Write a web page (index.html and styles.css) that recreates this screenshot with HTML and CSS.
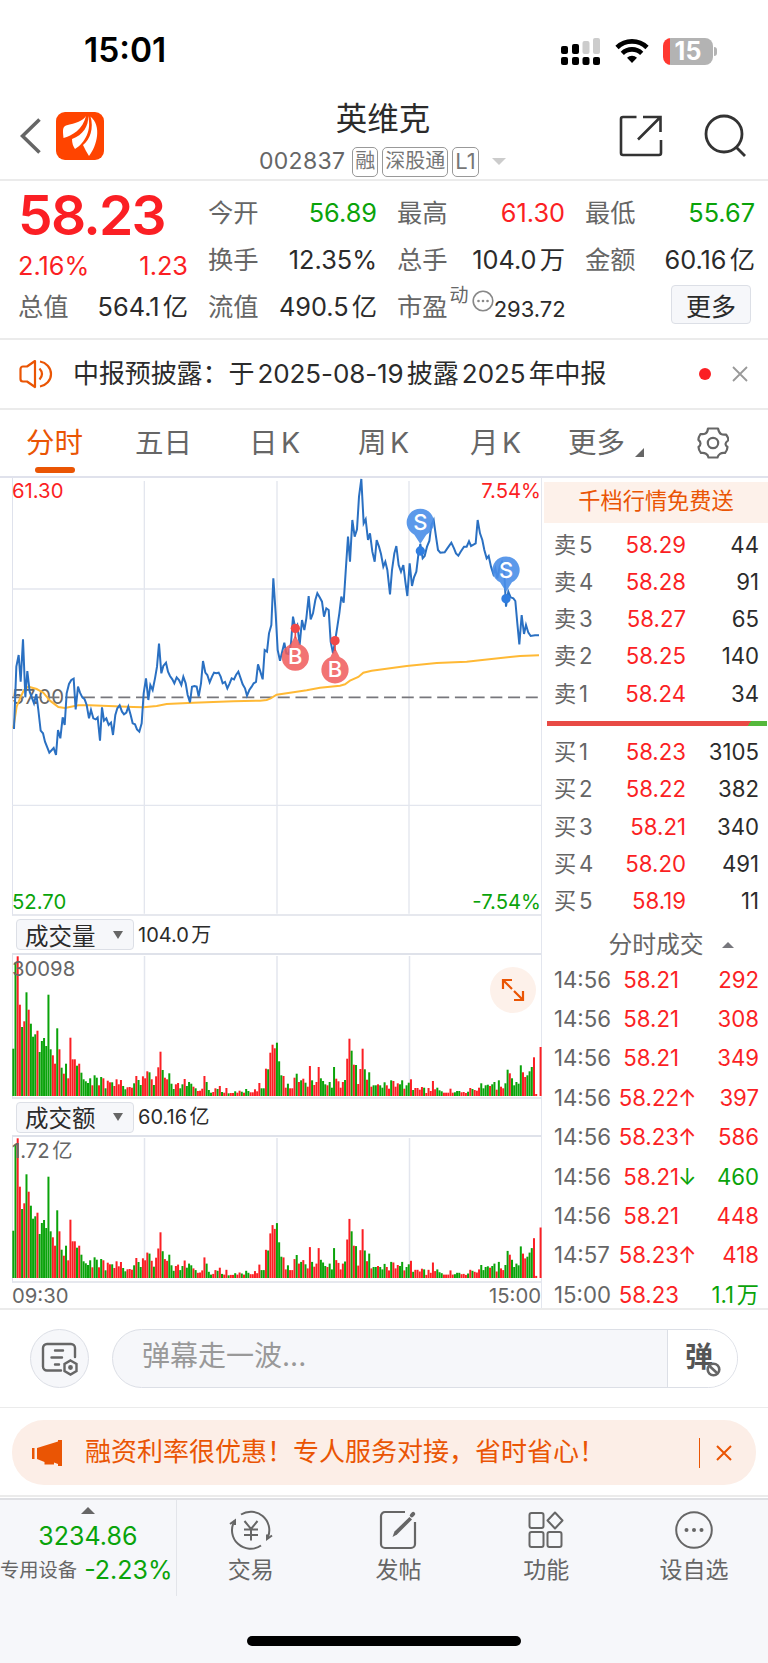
FILE: index.html
```
<!DOCTYPE html>
<html lang="zh-CN">
<head>
    <meta charset="UTF-8">
    <title>英维克 002837</title>
    <link rel="stylesheet" href="styles.css">
</head>
<body>
    <!-- 状态栏 -->
    <div class="status-bar">
        <span class="clock">15:01</span>
        <div class="status-icons">
            <svg class="signal" width="40" height="28" viewBox="0 0 40 28">
                <g fill="#000">
                    <rect x="0" y="9" width="7" height="8" rx="2"/>
                    <rect x="11" y="7" width="7" height="10" rx="2"/>
                    <rect x="0" y="20" width="7" height="8" rx="2"/>
                    <rect x="11" y="20" width="7" height="8" rx="2"/>
                    <rect x="21.500" y="20" width="7" height="8" rx="2"/>
                    <rect x="32" y="20" width="7" height="8" rx="2"/>
                </g>
                <rect x="21.500" y="4" width="7" height="13" rx="2" fill="#ccc"/>
                <rect x="32" y="1" width="7" height="16" rx="2" fill="#ccc"/>
            </svg>
            <svg class="wifi" width="34" height="26" viewBox="0 0 34 26" fill="none" stroke="#000" stroke-width="4.600">
                <path d="M2 9.500a21.500 21.500 0 0 1 30 0"/>
                <path d="M7.300 15.300a14 14 0 0 1 19.400 0"/>
                <path d="M17 25l-5-5.300a7.500 7.500 0 0 1 10 0z" fill="#000" stroke="none"/>
            </svg>
            <div class="battery"><span>15</span></div>
        </div>
    </div>

    <!-- 顶部导航 -->
    <div class="nav-bar">
        <svg class="back" width="22" height="36" viewBox="0 0 22 36" fill="none" stroke="#666" stroke-width="3.600"><path d="M19.500 1.500L2.500 18l17 16.500"/></svg>
        <svg class="logo" width="48" height="48" viewBox="0 0 48 48">
            <rect width="48" height="48" rx="9" fill="#ff4400"/>
            <path fill="#fff" d="M30 4C27 9 20 11 10 13.500C6 15 7 20 7.500 26C16 24 27 17 30 4z"/>
            <path fill="#fff" d="M32 4C33 14 27 23 16 27C16 31 17 34 19 37C29 31 36 18 32 4z"/>
            <path fill="#fff" d="M34.500 4.500C38 16 34 28 27 33C29 37 31 41 33 44C41 34 46 14 34.500 4.500z"/>
        </svg>
        <div class="stock-title">
            <h1>英维克</h1>
            <div class="stock-code">
                <span class="code">002837</span>
                <span class="tag">融</span>
                <span class="tag">深股通</span>
                <span class="tag level1">L1</span>
                <i class="tri-down light"></i>
            </div>
        </div>
        <svg class="share" width="44" height="44" viewBox="0 0 44 44" fill="none" stroke="#333" stroke-width="2.600">
            <path d="M17.500 3H4a2 2 0 0 0-2 2v34a2 2 0 0 0 2 2h36a2 2 0 0 0 2-2V26M24 3h17.500v15M41 3.500L19 25.500"/>
        </svg>
        <svg class="search" width="44" height="44" viewBox="0 0 44 44" fill="none" stroke="#333" stroke-width="2.800">
            <circle cx="20" cy="20" r="18"/><path d="M32.500 33.500l8.500 8.500"/>
        </svg>
    </div>

    <!-- 行情数据 -->
    <div class="quote">
        <div class="price up">58.23</div>
        <div class="field"><label>今开</label><b class="down">56.89</b></div>
        <div class="field"><label>最高</label><b class="up">61.30</b></div>
        <div class="field"><label>最低</label><b class="down">55.67</b></div>
        <div class="field change up"><b>2.16%</b><b>1.23</b></div>
        <div class="field"><label>换手</label><b>12.35%</b></div>
        <div class="field"><label>总手</label><b>104.0万</b></div>
        <div class="field"><label>金额</label><b>60.16亿</b></div>
        <div class="field"><label>总值</label><b>564.1亿</b></div>
        <div class="field"><label>流值</label><b>490.5亿</b></div>
        <div class="field pe">
            <label>市盈</label><sup>动</sup>
            <svg width="22" height="22" viewBox="0 0 22 22"><circle cx="11" cy="11" r="9.800" fill="none" stroke="#888" stroke-width="1.600"/><g fill="#888"><circle cx="6.500" cy="11" r="1.300"/><circle cx="11" cy="11" r="1.300"/><circle cx="15.500" cy="11" r="1.300"/></g></svg>
            <b>293.72</b>
        </div>
        <div class="more-cell"><button class="more-btn">更多</button></div>
    </div>

    <!-- 公告 -->
    <div class="notice">
        <svg width="34" height="30" viewBox="0 0 34 30" fill="none" stroke="#ea5504" stroke-width="2.200" stroke-linejoin="round">
            <path d="M16 2L8 7.500H4a2.500 2.500 0 0 0-2.500 2.500v10A2.500 2.500 0 0 0 4 22.500h4L16 28z"/>
            <path d="M20.500 9.500q5 5.500 0 11M21 2.500c6 1 11 6 11 12.500s-5 11.500-11 12.500"/>
        </svg>
        <p>中报预披露：于2025-08-19披露2025年中报</p>
        <i class="dot"></i>
        <svg width="16" height="16" viewBox="0 0 16 16" stroke="#999" stroke-width="1.800"><path d="M1 1l14 14M15 1L1 15"/></svg>
    </div>

    <!-- 周期切换 -->
    <div class="tabs">
        <span class="tab active">分时</span>
        <span class="tab">五日</span>
        <span class="tab">日K</span>
        <span class="tab">周K</span>
        <span class="tab">月K</span>
        <span class="tab tab-more">更多</span>
        <svg class="gear" width="32" height="32" viewBox="0 0 32 32" fill="none" stroke="#666" stroke-width="2.200" stroke-linejoin="round">
            <path d="M11 1.500h10q1 4.500 3 5.500t5 .5q3 4 2 6-2.500 2-2.500 3.500t2 3q0 3-2.500 6-3-.5-5 .8t-2.500 3.700h-9q-.5-2.500-2.500-3.700t-5-.8Q1.500 23 1.500 20q2-1.500 2-3.500t-2-3.500q-.5-2 2-6 3 .5 5-.5T11 1.500z"/>
            <circle cx="16" cy="16" r="5.200"/>
        </svg>
    </div>

    <div class="main">
        <div class="charts">
            <!-- 分时走势，坐标按 3 倍绘制 -->
            <div class="chart price-chart">
                <svg width="530" height="438" viewBox="36 24 1590 1314">
                    <g stroke="#e3e6ee" stroke-width="4">
                        <path d="M36 357h1590M36 1006h1590M433 33v1298M831 33v1298M1227 33v1298"/>
                    </g>
                    <text class="mid-label" x="35" y="702">57.00</text>
                    <path d="M36 682H1620" stroke="#77777c" stroke-width="5" stroke-dasharray="36 17.150"/>
                    <polyline class="avg-line" points="40,775 50,710 60,685 72,660 85,650 110,657 130,668 150,692 175,711 195,714 235,706 270,706 400,711 430,712 470,708 500,702 580,698 700,694 780,692 800,690 812,685 830,674 880,667 920,661 960,653 1020,647 1035,643 1050,632 1075,621 1090,608 1115,602 1220,588 1310,579 1400,575 1440,571 1530,561 1560,558 1617,556"/>
                    <polyline class="price-line" points="42,777 49,590 56,555 62,635 69,508 76,682 82,603 89,665 102,700 109,672 115,720 122,782 129,790 135,815 148,848 161,834 168,855 174,780 181,805 188,742 194,765 200,670 207,642 214,630 221,626 227,718 234,650 240,668 247,682 254,688 260,705 267,745 273,720 280,745 287,748 293,742 300,812 306,712 312,752 319,745 326,765 333,758 339,795 346,735 352,715 359,706 366,725 372,733 379,728 385,710 392,735 398,760 405,763 411,778 418,785 425,760 431,670 438,625 445,690 451,645 458,660 465,625 471,590 477,521 484,610 490,588 498,578 504,605 510,618 517,628 523,640 530,622 537,630 544,645 550,620 557,640 563,675 570,697 576,650 583,648 590,650 596,680 603,640 609,573 616,608 622,615 629,637 636,620 642,608 649,610 656,608 662,620 668,640 675,636 682,655 689,640 695,625 702,628 708,615 715,605 722,625 728,643 735,655 741,677 748,660 755,650 761,640 768,636 774,583 781,605 788,628 794,540 801,545 807,490 814,465 820,325 827,430 833,540 840,572 853,518 859,550 866,552 873,520 879,440 886,475 892,465 899,525 906,450 913,480 919,445 926,378 932,448 939,430 946,390 952,370 959,382 966,395 972,440 979,415 986,420 992,515 999,550 1005,515 1012,470 1018,430 1024,380 1031,398 1038,290 1044,200 1050,275 1057,150 1064,200 1071,178 1077,80 1084,27 1091,160 1097,148 1104,210 1110,190 1117,245 1124,275 1130,210 1137,230 1143,252 1150,290 1156,275 1162,300 1170,373 1176,300 1183,250 1189,228 1196,285 1203,305 1210,285 1216,335 1222,378 1229,280 1236,348 1242,322 1249,305 1255,255 1261,222 1268,265 1274,258 1281,230 1288,213 1294,165 1301,150 1308,200 1314,240 1321,248 1334,247 1342,235 1354,218 1362,235 1368,250 1375,257 1382,245 1392,230 1400,230 1407,214 1413,228 1427,220 1433,150 1440,190 1447,210 1453,240 1460,265 1466,258 1473,290 1480,312 1486,295 1492,325 1499,290 1506,275 1512,290 1518,410 1525,365 1532,382 1540,385 1546,393 1552,460 1558,523 1565,435 1572,492 1578,465 1585,488 1592,498 1605,496 1617,496"/>
                    <!-- 买卖点 -->
                    <g class="buy">
                        <path d="M886 495l-14 28a41 41 0 1 0 28 0z"/><circle cx="886" cy="475" r="14"/><path class="stem" d="M886 480v25"/><text x="886" y="581">B</text>
                        <path d="M1005 533l-14 28a41 41 0 1 0 28 0z"/><circle cx="1005" cy="512" r="14"/><path class="stem" d="M1005 518v25"/><text x="1005" y="620">B</text>
                    </g>
                    <g class="sell">
                        <path d="M1261 222l-18-28a41 41 0 1 1 36 0z"/><circle cx="1261" cy="243" r="14"/><text x="1261" y="181">S</text>
                        <path d="M1518 365l-18-28a41 41 0 1 1 36 0z"/><circle cx="1518" cy="386" r="14"/><text x="1518" y="324">S</text>
                    </g>
                </svg>
                <div class="scale top up"><span>61.30</span><span>7.54%</span></div>
                <div class="scale bottom down"><span>52.70</span><span>-7.54%</span></div>
            </div>
            <div class="indicator"><button>成交量<i class="tri-down"></i></button><span>104.0万</span></div>
            <div class="chart bar-chart">
                <svg id="volume" width="530" height="144" viewBox="0 0 530 144"></svg>
                <span class="max-label">30098</span>
                <span class="expand">
                    <svg width="24" height="24" viewBox="0 0 24 24" fill="none" stroke="#ea5504" stroke-width="2.200"><path d="M2 11V2h9M2 2l9 9M22 13v9h-9M22 22l-9-9"/></svg>
                </span>
            </div>
            <div class="indicator second"><button>成交额<i class="tri-down"></i></button><span>60.16亿</span></div>
            <div class="chart bar-chart amount">
                <svg id="amount" width="530" height="144" viewBox="0 0 530 144"></svg>
                <span class="max-label">1.72亿</span>
            </div>
            <div class="time-axis"><span>09:30</span><span>15:00</span></div>
        </div>

        <!-- 五档与成交明细 -->
        <div class="book">
            <div class="level-banner">千档行情免费送</div>
            <div class="level"><span>卖5</span><b>58.29</b><em>44</em></div>
            <div class="level"><span>卖4</span><b>58.28</b><em>91</em></div>
            <div class="level"><span>卖3</span><b>58.27</b><em>65</em></div>
            <div class="level"><span>卖2</span><b>58.25</b><em>140</em></div>
            <div class="level"><span>卖1</span><b>58.24</b><em>34</em></div>
            <div class="ratio"></div>
            <div class="level"><span>买1</span><b>58.23</b><em>3105</em></div>
            <div class="level"><span>买2</span><b>58.22</b><em>382</em></div>
            <div class="level"><span>买3</span><b>58.21</b><em>340</em></div>
            <div class="level"><span>买4</span><b>58.20</b><em>491</em></div>
            <div class="level"><span>买5</span><b>58.19</b><em>11</em></div>
            <div class="trades-title">分时成交<i class="tri-up"></i></div>
            <div class="trade"><span>14:56</span><b>58.21</b><i></i><em>292</em></div>
            <div class="trade"><span>14:56</span><b>58.21</b><i></i><em>308</em></div>
            <div class="trade"><span>14:56</span><b>58.21</b><i></i><em>349</em></div>
            <div class="trade"><span>14:56</span><b>58.22</b><i>↑</i><em>397</em></div>
            <div class="trade"><span>14:56</span><b>58.23</b><i>↑</i><em>586</em></div>
            <div class="trade"><span>14:56</span><b>58.21</b><i class="down">↓</i><em class="down">460</em></div>
            <div class="trade"><span>14:56</span><b>58.21</b><i></i><em>448</em></div>
            <div class="trade"><span>14:57</span><b>58.23</b><i>↑</i><em>418</em></div>
            <div class="trade"><span>15:00</span><b>58.23</b><i></i><em class="down">1.1万</em></div>
        </div>
    </div>

    <!-- 弹幕输入 -->
    <div class="danmu">
        <div class="danmu-set">
            <svg width="38" height="34" viewBox="0 0 38 34" fill="none" stroke="#666" stroke-width="2.400" stroke-linecap="round">
                <path d="M20 28.500H6a4 4 0 0 1-4-4V6a4 4 0 0 1 4-4h24a4 4 0 0 1 4 4v9M14 8.500h8M10.500 15.500H21M14 22.500h4"/>
                <path d="M29.500 18.500l6 3.500v7l-6 3.500-6-3.500v-7z"/><circle cx="29.500" cy="25.500" r="1.200" fill="#666"/>
            </svg>
        </div>
        <div class="danmu-box">
            <span class="placeholder">弹幕走一波...</span>
            <div class="danmu-toggle">
                <span>弹</span>
                <svg width="15" height="15" viewBox="0 0 15 15" fill="#fff" stroke="#666" stroke-width="2.600"><circle cx="7.500" cy="7.500" r="5.800"/><path d="M3.500 4l8 7.500"/></svg>
            </div>
        </div>
    </div>

    <!-- 推广条 -->
    <div class="promo-wrap">
        <div class="promo">
            <svg width="30" height="26" viewBox="0 0 30 26" fill="#ea5504"><path d="M0 8h2.500v11H0zM5 8L26 1.500V0h4v26h-4v-2l-4-1.500v2h-9.500V22L5 19z"/></svg>
            <p>融资利率很优惠！专人服务对接，省时省心！</p>
            <svg class="promo-close" width="16" height="16" viewBox="0 0 16 16" stroke="#ea5504" stroke-width="2"><path d="M1 1l14 14M15 1L1 15"/></svg>
        </div>
    </div>

    <!-- 底部栏 -->
    <div class="bottom-bar">
        <div class="index-cell">
            <i class="tri-up dark"></i>
            <b>3234.86</b>
            <div><span>专用设备</span><b>-2.23%</b></div>
        </div>
        <div class="tool">
            <svg width="44" height="40" viewBox="0 0 44 40" fill="none" stroke="#666" stroke-width="2">
                <path d="M12 4.500A18.500 18.500 0 0 1 39 27M32 35.500A18.500 18.500 0 0 1 5.500 11"/>
                <path d="M1 14l5-3.500V15M43 25.500L38 29v-4.500M15.500 11l6.500 8 6.500-8M22 19v11.500M15 19.500h14M15 25h14"/>
            </svg>
            <span>交易</span>
        </div>
        <div class="tool">
            <svg width="38" height="40" viewBox="0 0 38 40" fill="none" stroke="#666" stroke-width="2.200">
                <path d="M26 2H6a4 4 0 0 0-4 4v28a4 4 0 0 0 4 4h26a4 4 0 0 0 4-4V12"/>
                <path d="M13.500 27l2-5.500L30.500 7l2.500 2.500L18 24.500z" fill="#666" stroke="none"/><path d="M32.800 5.300l1.400-1.400" stroke-width="4" stroke-linecap="round"/>
            </svg>
            <span>发帖</span>
        </div>
        <div class="tool">
            <svg width="36" height="38" viewBox="0 0 36 38" fill="none" stroke="#666" stroke-width="2">
                <rect x="1.500" y="2" width="14" height="15" rx="2"/><rect x="1.500" y="21" width="14" height="15" rx="2"/><rect x="19.500" y="21" width="14" height="15" rx="2"/>
                <path d="M27 1.500l7.500 8-7.500 8-7.500-8z" stroke-linejoin="round"/>
            </svg>
            <span>功能</span>
        </div>
        <div class="tool">
            <svg width="40" height="40" viewBox="0 0 40 40"><circle cx="20" cy="20" r="17.800" fill="none" stroke="#666" stroke-width="2"/><g fill="#666"><circle cx="12.500" cy="20" r="2"/><circle cx="20" cy="20" r="2"/><circle cx="27.500" cy="20" r="2"/></g></svg>
            <span>设自选</span>
        </div>
        <div class="home-bar"></div>
    </div>

    <script>
        // 每分钟成交量柱: r 涨 / g 跌 + 高度（3 倍像素）
        const bars = `g142 g400 r419 r274 g207 r224 g311 r259 g217 g178 g185 r196 g132 g165 g174 g150 g304 g140 r122 r97
            g203 r140 g85 r67 g97 r53 r175 r110 r110 g91 r97 g70 g50 g44 g39 g53 r32 g62 g55 r32
            g57 r53 g23 r46 r41 g41 r30 r50 r35 r48 g30 g20 r26 r27 r25 g38 r60 g48 g33 r59
            r53 r74 g71 r50 g33 r59 r86 r133 g78 r55 r50 g68 g37 g21 r35 r39 g23 g35 r51 g30
            g42 g37 r28 g23 r15 r16 r22 r60 g42 g18 g10 r12 r23 g21 r30 g12 r10 r24 g8 r9
            r9 g14 r10 r16 g13 r10 g21 g15 r11 r11 r20 r14 r39 g23 g23 r82 g80 r130 r154 r143
            g160 g104 g62 r60 r25 g37 r23 r23 r55 g67 r42 g47 r52 g40 r28 r90 g47 r33 r42 r87
            g53 g45 g35 r32 g42 g25 g87 r52 r44 r25 r42 g48 r112 r172 g136 r94 g93 r36 r81 r142
            g80 r49 g71 r28 g32 g32 r35 g32 g25 g41 r32 r22 g47 r45 r28 r38 g35 g47 r22 g32
            g40 r50 g18 r24 r24 r19 r27 g25 r9 r24 r15 r45 r20 g25 g17 g14 r10 r10 r10 r22
            r10 g11 g15 g15 r11 r12 r9 g13 r24 g21 r18 r16 r25 g38 g23 g32 g34 r30 g35 g42
            r19 g47 r28 r23 g38 g79 r68 g53 g32 g42 g37 g92 r71 r57 g62 g74 g87 r116 r6 g0
            r147`.split(/\s+/);

        function drawBars(id, lateScale) {
            let html = '<path d="M132.500 1v140M265 1v140M397.500 1v140" stroke="#e3e6ee" stroke-width="1.500"/>';
            bars.forEach((bar, i) => {
                const scale = i > 60 ? lateScale : 1;
                const h = Number(bar.slice(1)) / 3 * scale;
                const color = bar[0] === 'r' ? '#fb1f24' : '#0aa30a';
                const x = .3 + i * 2.197;
                html += `<rect x="${x.toFixed(2)}" y="${(141 - h).toFixed(1)}" width="2" height="${h.toFixed(1)}" fill="${color}"/>`;
            });
            document.getElementById(id).innerHTML = html;
        }

        drawBars('volume', 1);
        drawBars('amount', 1.03);
    </script>
</body>
</html>
```
FILE: styles.css
```
* {
    box-sizing: border-box;
}

body {
    margin: 0;
    width: 768px;
    background: #fff;
    font-family: Inter, "Noto Sans CJK SC", sans-serif;
    color: #2b2b2b;
    text-autospace: normal;
    line-height: 1;
    white-space: nowrap;
}

b, em, i {
    font-weight: 400;
    font-style: normal;
}

button {
    font-family: inherit;
    color: inherit;
    padding: 0;
    background: #f6f7fa;
    border: 1px solid #dcdfe6;
    border-radius: 4px;
}

svg {
    flex: none;
}

.up { color: #fb1f24; }
.down { color: #0aa30a; }

/* 小三角 */
.tri-down, .tri-up {
    border: 5px solid transparent;
    border-bottom-width: 0;
    border-top: 8px solid #666;
}

.tri-down.light {
    border-width: 7px 7px 0;
    border-top-color: #ccc;
}

.tri-up {
    border-width: 0 6px 6px;
    border-bottom: 6px solid #77777c;
}

.tri-up.dark {
    border-width: 0 7px 7px;
    border-bottom-color: #666;
}

/* 状态栏 */
.status-bar {
    height: 92px;
    padding: 10px 55px 0 84px;
    display: flex;
    align-items: center;
    justify-content: space-between;
}

.clock {
    font-size: 33.500px;
    font-weight: 600;
    color: #000;
}

.status-icons {
    display: flex;
    align-items: center;
}

.wifi {
    margin: 0 14px 0 14px;
}

.battery {
    position: relative;
    width: 50px;
    height: 27px;
    border-radius: 8px;
    background: linear-gradient(90deg, #ff3830 7px, #b3b3b3 7px);
    color: #fff;
    font-size: 25px;
    font-weight: 700;
    text-align: center;
    line-height: 27px;
}

.battery::after {
    content: "";
    position: absolute;
    left: 51px;
    top: 9px;
    width: 3px;
    height: 9px;
    border-radius: 0 4px 4px 0;
    background: #b3b3b3;
}

/* 导航 */
.nav-bar {
    height: 89px;
    padding: 0 20px 0 20px;
    border-bottom: 2px solid #ebebeb;
    display: flex;
    align-items: center;
}

.logo {
    margin-left: 14px;
}

.stock-title {
    flex: 1;
    height: 84px;
    padding-left: 155px;
}

.stock-title h1 {
    margin: 7px 0 10px;
    width: 248px;
    text-align: center;
    font-size: 31.500px;
    font-weight: 400;
    line-height: 36px;
}

.stock-code {
    display: flex;
    align-items: center;
    gap: 4px;
    height: 30px;
}

.code {
    font-size: 23px;
    color: #666;
    letter-spacing: .3px;
    margin-right: 3px;
}

.tag {
    height: 30px;
    padding: 0 2px;
    border: 1.500px solid #999;
    border-radius: 5px;
    color: #777;
    font-size: 20px;
    line-height: 27px;
}

.tag.level1 {
    font-size: 22px;
}

.stock-code .tri-down {
    margin-left: 9px;
}

.share {
    margin-right: 41px;
}

/* 行情 */
.quote {
    height: 159px;
    padding: 8px 12px 0 18px;
    border-bottom: 2px solid #ebebeb;
    display: grid;
    grid-template-columns: 170px 169px 168px 170px;
    column-gap: 20px;
    grid-template-rows: 47px 47px 47px;
    font-size: 25.300px;
}

.price {
    font-size: 55px;
    font-weight: 600;
    line-height: 52px;
    letter-spacing: -1.700px;
}

.field {
    display: flex;
    align-items: center;
    justify-content: space-between;
}

.field label {
    color: #666;
}

.change {
    padding-top: 13px;
}

.pe {
    justify-content: flex-start;
}

.pe sup {
    font-size: 19px;
    color: #666;
    margin: -23px 3px 0 2px;
}

.pe svg {
    margin-top: -12px;
}

.pe b {
    font-size: 22px;
    margin: 5px 0 0 auto;
}

.more-cell {
    display: flex;
    align-items: center;
    justify-content: flex-end;
    padding: 0 4px 4px 0;
}

.more-btn {
    width: 80px;
    height: 39px;
    font-size: 25px;
}

/* 公告 */
.notice {
    height: 70px;
    padding: 0 20px 0 19px;
    border-bottom: 2px solid #ebebeb;
    display: flex;
    align-items: center;
}

.notice p {
    flex: 1;
    margin: 0 0 0 20px;
    font-size: 26px;
    letter-spacing: -.1px;
}

.dot {
    width: 12px;
    height: 12px;
    margin-right: 21px;
    border-radius: 50%;
    background: #fb1f24;
}

/* 周期 */
.tabs {
    height: 68px;
    padding-left: 26px;
    border-bottom: 2px solid #e0e2ec;
    display: grid;
    grid-template-columns: 109px 114px 109px 112px 98px 129px auto;
    align-items: center;
    font-size: 28.500px;
    color: #666;
}

.tab {
    position: relative;
}

.tab.active {
    color: #ea5504;
}

.tab.active::after {
    content: "";
    position: absolute;
    left: 9px;
    top: 38px;
    width: 40px;
    height: 6px;
    border-radius: 3px;
    background: #ea5504;
}

.tab-more::after {
    content: "";
    position: absolute;
    left: 67px;
    bottom: 0;
    border-left: 9px solid transparent;
    border-bottom: 9px solid #666;
}

/* 主体 */
.main {
    display: flex;
    height: 832px;
    border-bottom: 2px solid #ebebeb;
}

.charts {
    width: 542px;
    padding-left: 12px;
    border-right: 1px solid #e3e6ee;
}

.chart {
    position: relative;
    border-left: 1px solid #dfe2ec;
    border-bottom: 2px solid #e6e8ee;
}

.chart > svg {
    display: block;
    margin-left: -1px;
}

.price-chart {
    height: 438px;
}

.price-line, .avg-line {
    fill: none;
    stroke: #2a70c2;
    stroke-width: 6;
}

.avg-line {
    stroke: #ffb935;
}

.mid-label {
    font-size: 61px;
    fill: #666;
}

.buy { fill: #f05a5ad9; }
.sell { fill: #4a8ee8e6; }
.buy circle { fill: #f04848; }
.sell circle { fill: #2f7de0; }

.stem {
    stroke: #f04848;
    stroke-width: 5;
}

.buy text, .sell text {
    fill: #fff;
    font-size: 66px;
    font-weight: 500;
    text-anchor: middle;
}

.scale {
    position: absolute;
    left: -1px;
    right: 0;
    display: flex;
    justify-content: space-between;
    font-size: 20.300px;
}

.scale.top { top: 3px; }
.scale.bottom { bottom: 2px; }

.indicator {
    height: 39px;
    padding-left: 4px;
    border-bottom: 2px solid #dfe2ea;
    display: flex;
    align-items: center;
    gap: 4px;
    font-size: 20px;
}

.indicator button {
    width: 118px;
    height: 31px;
    padding: 0 10px 0 8px;
    display: flex;
    align-items: center;
    justify-content: space-between;
    font-size: 23.500px;
}

.bar-chart {
    height: 144px;
}

.bar-chart.amount {
    height: 146px;
}

.indicator.second {
    height: 38px;
}

.max-label {
    position: absolute;
    left: -1px;
    top: 4px;
    font-size: 20.300px;
    color: #666;
}

.expand {
    position: absolute;
    right: 5px;
    top: 12px;
    width: 46px;
    height: 46px;
    border-radius: 50%;
    background: #fdf1ea;
    display: flex;
    align-items: center;
    justify-content: center;
}

.time-axis {
    display: flex;
    justify-content: space-between;
    padding-top: 3px;
    font-size: 20.300px;
    color: #666;
}

/* 盘口 */
.book {
    flex: 1;
    padding: 4px 0 0 2px;
    font-size: 22.200px;
}

.level-banner {
    height: 41px;
    margin-bottom: 3px;
    background: #fdf1ea;
    color: #ea5504;
    text-align: center;
    line-height: 38px;
}

.level, .trade {
    display: flex;
    align-items: center;
    height: 37.300px;
    padding: 0 9px 0 10px;
}

.level span, .trade span {
    width: 62px;
    color: #666;
}

.level b {
    width: 70px;
    text-align: right;
    color: #fb1f24;
}

.level em, .trade em {
    flex: 1;
    text-align: right;
}

.ratio {
    height: 5px;
    margin: 9px 1px 7px 3px;
    background: linear-gradient(120deg, #e84a45 91.500%, #55b83c 91.500%);
}

.trades-title {
    display: flex;
    align-items: center;
    justify-content: center;
    gap: 18px;
    height: 40px;
    padding: 10px 0 0 30px;
    font-size: 23.800px;
    color: #666;
}

.trade {
    height: 39.400px;
    color: #fb1f24;
}

.trade b {
    width: 63px;
    text-align: right;
}

.trade i {
    width: 15px;
    margin-left: -1px;
}

.trade .down {
    color: #0aa30a;
}

/* 弹幕 */
.danmu {
    height: 98px;
    padding: 0 30px;
    border-bottom: 1px solid #ebebeb;
    display: flex;
    align-items: center;
    justify-content: space-between;
}

.danmu-set {
    width: 59px;
    height: 59px;
    border: 1px solid #dcdfe6;
    border-radius: 50%;
    background: #f6f7fa;
    display: flex;
    align-items: center;
    justify-content: center;
}

.danmu-box {
    width: 626px;
    height: 59px;
    border: 1px solid #dcdfe6;
    border-radius: 30px;
    background: #f6f7fa;
    overflow: hidden;
    display: flex;
    justify-content: space-between;
}

.placeholder {
    padding-left: 29px;
    font-size: 28px;
    line-height: 52px;
    color: #999;
    text-autospace: no-autospace;
}

.danmu-toggle {
    position: relative;
    width: 70px;
    background: #fff;
    border-left: 1px solid #dcdfe6;
    padding-left: 17px;
    font-size: 28px;
    font-weight: 700;
    line-height: 54px;
    color: #555;
}

.danmu-toggle svg {
    position: absolute;
    left: 38px;
    top: 32px;
}

/* 推广 */
.promo-wrap {
    height: 89px;
    padding: 12px 12px 0;
    border-bottom: 2px solid #ebebeb;
}

.promo {
    height: 65px;
    padding: 0 24px 0 20px;
    border-radius: 32px;
    background: #fceee7;
    color: #ea5504;
    display: flex;
    align-items: center;
}

.promo p {
    flex: 1;
    margin: 0 0 0 23px;
    padding-bottom: 2px;
    font-size: 26px;
    line-height: 28px;
    border-right: 1.500px solid #ea5504;
}

.promo-close {
    margin-left: 16px;
}

/* 底部 */
.bottom-bar {
    position: relative;
    height: 165px;
    margin-top: 1px;
    border-top: 2px solid #dfe0e4;
    background: #f6f7fa;
    display: flex;
    align-items: flex-start;
}

.index-cell {
    width: 177px;
    height: 96px;
    padding-top: 7px;
    border-right: 1px solid #e3e5ea;
    display: flex;
    flex-direction: column;
    align-items: center;
    font-size: 25px;
    color: #0aa30a;
}

.index-cell > b {
    margin: 10px 0 9px;
}

.index-cell div {
    width: 100%;
    display: flex;
    align-items: center;
    gap: 7px;
}

.index-cell div span {
    font-size: 19.300px;
    color: #666;
}

.tool {
    width: 148px;
    padding-top: 10px;
    display: flex;
    flex-direction: column;
    align-items: center;
    font-size: 23px;
    color: #666;
}

.tool svg {
    height: 40px;
    margin-bottom: 9px;
}

.home-bar {
    position: absolute;
    left: 247px;
    bottom: 17px;
    width: 274px;
    height: 10px;
    border-radius: 5px;
    background: #000;
}
```
